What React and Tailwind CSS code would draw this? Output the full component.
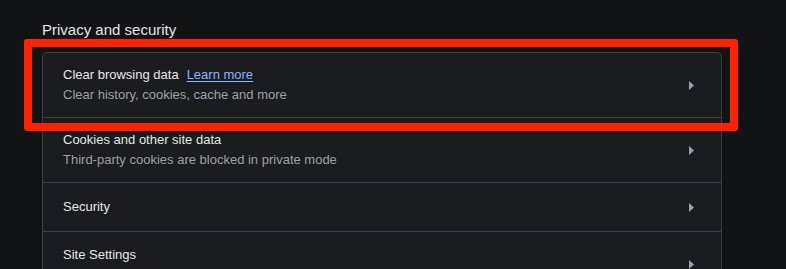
import React from 'react';

const Arrow = () => (
  <div className="flex h-5 w-5 items-center justify-center">
    <svg width="5" height="9" viewBox="0 0 5 9" className="text-[#9aa0a6]">
      <path d="M0 0 L5 4.5 L0 9 Z" fill="currentColor" />
    </svg>
  </div>
);

const Row = ({ title, subtitle, link, last }) => (
  <div
    className={`flex items-center justify-between pl-5 pr-[20px] ${
      subtitle ? 'h-[65px]' : 'h-[49px]'
    } ${last ? '' : 'border-b border-[#3c4149]'}`}
  >
    <div className="flex flex-col">
      <div className="flex items-center gap-2 text-[13px] leading-5 text-[#e6e6e6]">
        <span>{title}</span>
        {link && <span className="text-[#8ab4f8] underline underline-offset-2">{link}</span>}
      </div>
      {subtitle && (
        <div className="text-[13px] leading-5 text-[#9aa0a6] whitespace-nowrap">{subtitle}</div>
      )}
    </div>
    <Arrow />
  </div>
);

export default function App() {
  const rows = [
    { title: 'Clear browsing data', link: 'Learn more', subtitle: 'Clear history, cookies, cache and more' },
    { title: 'Cookies and other site data', subtitle: 'Third-party cookies are blocked in private mode' },
    { title: 'Security' },
    {
      title: 'Site Settings',
      subtitle: 'Controls what information sites can use and show (location, camera, pop-ups, and more)',
    },
  ];

  return (
    <div
      className="h-[269px] w-[786px] overflow-hidden bg-[#121315]"
      style={{ fontFamily: '"Liberation Sans", Arial, sans-serif' }}
    >
      <div className="ml-[42px] pt-[20px]">
        <h2 className="text-[15px] leading-5 text-[#e6e6e6]">Privacy and security</h2>

        <div className="relative mt-[12px] w-[680px]">
          <div className="rounded-[5px] border border-[#3c4149] bg-[#1a1c20]">
            {rows.map((row, i) => (
              <Row key={row.title} {...row} last={i === rows.length - 1} />
            ))}
          </div>

          {/* highlight box */}
          <div className="pointer-events-none absolute left-[-18px] top-[-13px] h-[92px] w-[714px] rounded-[3px] border-[8px] border-[#ff2200]" />
        </div>
      </div>
    </div>
  );
}
